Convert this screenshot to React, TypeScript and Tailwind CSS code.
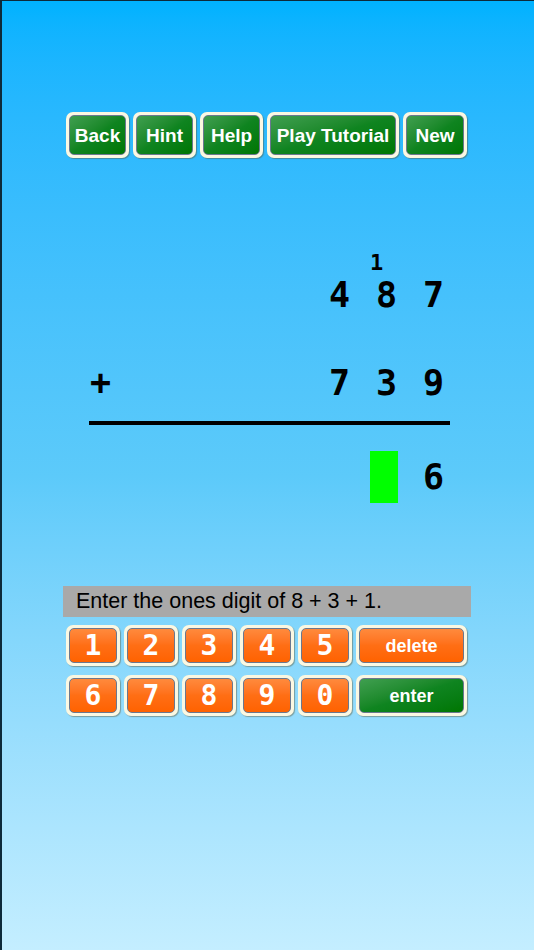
import React from 'react';

const mono = { fontFamily: '"DejaVu Sans Mono", "Liberation Mono", monospace' };
const sans = { fontFamily: '"Liberation Sans", Arial, sans-serif' };

interface ButtonProps {
  label: string;
  width: string;
  tone: 'green' | 'orange';
  digit?: boolean;
  tall?: boolean;
}

// glossy framed button used by the toolbar and the keypad
const GlossButton: React.FC<ButtonProps> = ({ label, width, tone, digit, tall }) => {
  const fill =
    tone === 'green'
      ? 'bg-gradient-to-br from-[#3f9f50] via-[#0f8420] to-[#007600]'
      : 'bg-gradient-to-b from-[#ff8a3c] via-[#ff6e14] to-[#ff6200]';
  return (
    <div
      className={`${width} ${tall ? 'h-[46px]' : 'h-[41px]'} shrink-0 rounded-[7px] bg-[#fbf8e2] p-[3px] shadow-[1px_1px_1px_rgba(90,80,40,0.45)]`}
    >
      <div
        className={`flex h-full w-full items-center justify-center rounded-[5px] border border-[#6a7890] ${fill}`}
      >
        <span
          className={
            digit
              ? 'text-[28px] font-bold leading-none text-white'
              : tall
                ? 'text-[19px] font-bold leading-none text-white'
                : 'text-[18px] font-bold leading-none text-white'
          }
          style={digit ? mono : sans}
        >
          {label}
        </span>
      </div>
    </div>
  );
};

const Digit: React.FC<{ value: string }> = ({ value }) => (
  <div className="flex w-[47px] shrink-0 justify-center text-[35px] font-bold leading-none text-black" style={mono}>
    {value}
  </div>
);

const App: React.FC = () => {
  return (
    <div className="h-[950px] w-full overflow-hidden border-l-2 border-t border-[#0d2a3a] bg-gradient-to-b from-[#00b2ff] via-[#5ccafa] to-[#c4eeff]">
      {/* toolbar */}
      <div className="ml-[64px] mt-[111px] flex gap-[4px]">
        <GlossButton label="Back" width="w-[63px]" tone="green" tall />
        <GlossButton label="Hint" width="w-[63px]" tone="green" tall />
        <GlossButton label="Help" width="w-[63px]" tone="green" tall />
        <GlossButton label="Play Tutorial" width="w-[132px]" tone="green" tall />
        <GlossButton label="New" width="w-[64px]" tone="green" tall />
      </div>

      {/* column addition */}
      <div className="ml-[87px] mt-[95px] w-[380px]">
        <div className="flex h-[20px] items-center">
          <span className="ml-[281px] text-[22px] font-bold leading-none text-black" style={mono}>
            1
          </span>
        </div>
        <div className="mt-[7px] flex h-[30px] items-center pl-[227px]">
          <Digit value="4" />
          <Digit value="8" />
          <Digit value="7" />
        </div>
        <div className="mt-[58px] flex h-[30px] items-center">
          <span className="ml-[1px] w-[226px] text-[35px] font-bold leading-none text-black" style={mono}>
            +
          </span>
          <Digit value="7" />
          <Digit value="3" />
          <Digit value="9" />
        </div>
        <div className="mt-[23px] h-[4px] w-[361px] bg-black" />
        <div className="mt-[26px] flex h-[52px] items-center pl-[227px]">
          <div className="w-[47px] shrink-0" />
          <div className="flex w-[47px] shrink-0 justify-center">
            <div className="mr-[6px] h-[52px] w-[28px] bg-[#00ff00]" />
          </div>
          <Digit value="6" />
        </div>
      </div>

      {/* prompt */}
      <div className="ml-[61px] mt-[83px] flex h-[31px] w-[408px] items-center bg-[#a9a9a9] pl-[13px]">
        <span className="text-[21.5px] leading-none text-black" style={sans}>
          Enter the ones digit of 8 + 3 + 1.
        </span>
      </div>

      {/* keypad */}
      <div className="ml-[64px] mt-[8px] flex flex-col gap-[9px]">
        <div className="flex gap-[4px]">
          {['1', '2', '3', '4', '5'].map((d) => (
            <GlossButton key={d} label={d} width="w-[54px]" tone="orange" digit />
          ))}
          <GlossButton label="delete" width="w-[111px]" tone="orange" />
        </div>
        <div className="flex gap-[4px]">
          {['6', '7', '8', '9', '0'].map((d) => (
            <GlossButton key={d} label={d} width="w-[54px]" tone="orange" digit />
          ))}
          <GlossButton label="enter" width="w-[111px]" tone="green" />
        </div>
      </div>
    </div>
  );
};

export default App;
